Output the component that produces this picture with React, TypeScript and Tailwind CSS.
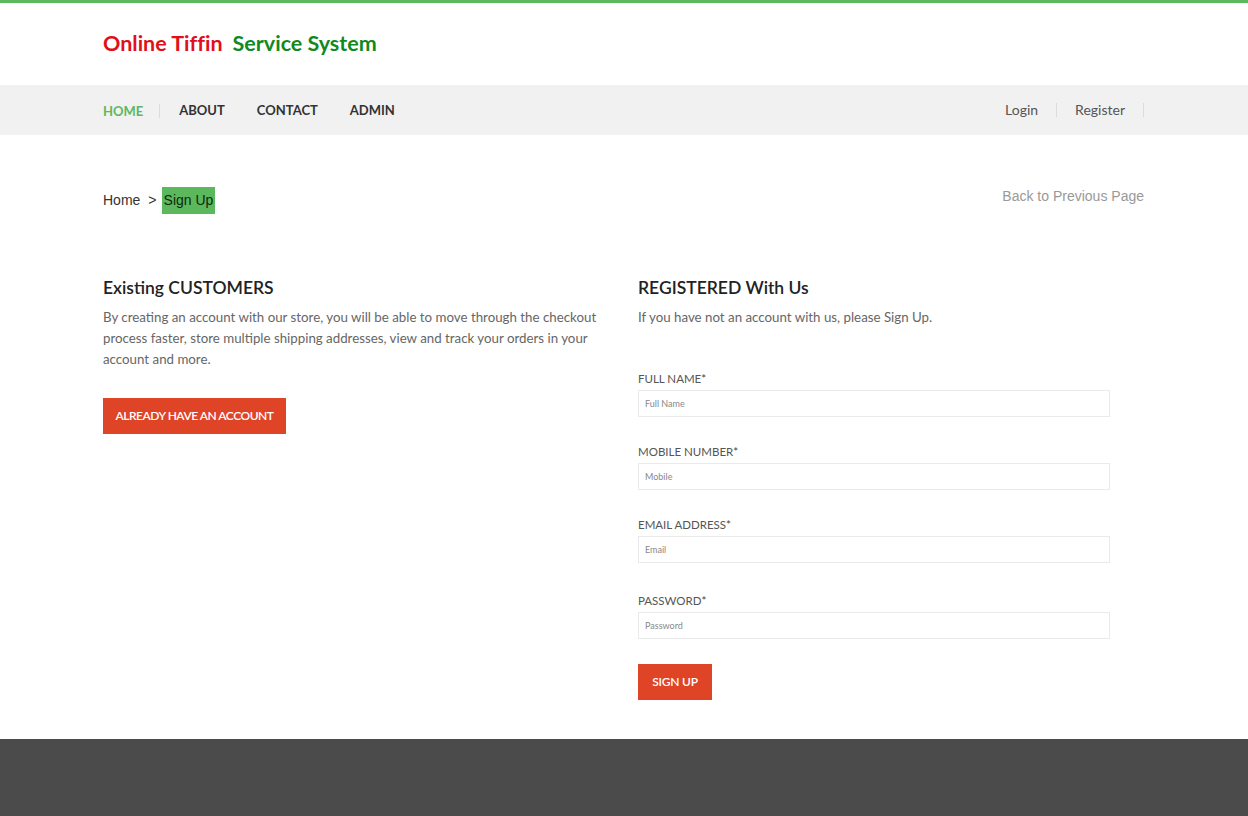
import { FC } from 'react'

const font = "font-['Lato','Liberation_Sans',sans-serif]"
const arial = "font-['Liberation_Sans',Arial,sans-serif]"

const fields = [
	{ label: 'FULL NAME', placeholder: 'Full Name', type: 'text', gap: 'mt-[43px]' },
	{ label: 'MOBILE NUMBER', placeholder: 'Mobile', type: 'text', gap: 'mt-[27px]' },
	{ label: 'EMAIL ADDRESS', placeholder: 'Email', type: 'email', gap: 'mt-[27px]' },
	{ label: 'PASSWORD', placeholder: 'Password', type: 'password', gap: 'mt-[30px]' },
]

const App: FC = () => {
	return (
		<div className={`${font} min-h-[816px] bg-white flex flex-col`}>
			<div className="border-t-[3px] border-[#5cb85c]">
				<div className="mx-auto w-[1040px] h-[82px] flex items-center">
					<h1 className="text-[21.5px] font-bold leading-none -ml-px [font-variant-ligatures:none]">
						<span className="text-[#e0101a]">Online Tiffin</span>
						<span className="text-[#0f8a1f] ml-[10px]">Service System</span>
					</h1>
				</div>
			</div>

			<nav className="bg-[#f1f1f1] h-[50px]">
				<div className="mx-auto w-[1040px] h-full flex items-center justify-between">
					<ul className="flex items-center font-bold text-[13px] text-[#333] -ml-px mt-px">
						<li className="text-[#5cb85c] pr-4 border-r border-[#dcdcdc] leading-[14px]">HOME</li>
						<li className="pl-[19px] pr-4">ABOUT</li>
						<li className="px-4">CONTACT</li>
						<li className="px-4">ADMIN</li>
					</ul>
					<ul className="flex items-center text-[14px] text-[#555]">
						<li className="pr-[18px] border-r border-[#dcdcdc] leading-[14px]">Login</li>
						<li className="pl-[18px] pr-[18px] border-r border-[#dcdcdc] leading-[14px]">Register</li>
					</ul>
				</div>
			</nav>

			<main className="flex-1">
				<div className={`${arial} mx-auto w-[1040px] mt-[51px] flex justify-between text-[14px]`}>
					<div className="flex items-center mt-px text-[#333] -ml-px">
						<span>Home</span>
						<span className="ml-2 mr-[5px]">&gt;</span>
						<span className="bg-[#5cb85c] px-[2px] py-[3px] text-[#0d2a0d]">Sign Up</span>
					</div>
					<a className="text-[#999] text-[14px] mt-0">Back to Previous Page</a>
				</div>

				<div className="mx-auto w-[1040px] mt-[62px] flex pb-[39px]">
					<section className="w-[534px] pr-[30px] -ml-px">
						<h2 className="text-[17.5px] font-semibold text-[#222] leading-[24px]">Existing CUSTOMERS</h2>
						<p className="mt-[7px] text-[13.3px] leading-[21px] text-[#666]">
							By creating an account with our store, you will be able to move through the checkout process faster, store
							multiple shipping addresses, view and track your orders in your account and more.
						</p>
						<button className="mt-[28px] h-[36px] w-[183px] bg-[#e04427] text-white text-[12px] font-semibold tracking-[-0.04em]">
							ALREADY HAVE AN ACCOUNT
						</button>
					</section>

					<section className="flex-1 ml-px">
						<h2 className="text-[17.5px] font-semibold text-[#222] leading-[24px]">REGISTERED With Us</h2>
						<p className="mt-[7px] text-[13.3px] leading-[21px] text-[#666]">
							If you have not an account with us, please Sign Up.
						</p>
						<form className="flex flex-col">
							{fields.map((f) => (
								<div key={f.label} className={f.gap}>
									<label className="block text-[11.5px] text-[#555] leading-[16px]">
										{f.label}
										<span className="text-[#444]">*</span>
									</label>
									<input
										type={f.type}
										placeholder={f.placeholder}
										className="mt-[3px] block w-[472px] h-[27px] border border-[#eaeaea] px-[6px] text-[9px] text-[#444] placeholder:text-[#888] outline-none"
									/>
								</div>
							))}
							<button
								type="button"
								className="mt-[25px] self-start h-[36px] w-[74px] bg-[#e04427] text-white text-[12px] font-semibold tracking-[-0.02em]"
							>
								SIGN UP
							</button>
						</form>
					</section>
				</div>
			</main>

			<footer className="bg-[#4b4b4b] h-[77px]" />
		</div>
	)
}

export default App
